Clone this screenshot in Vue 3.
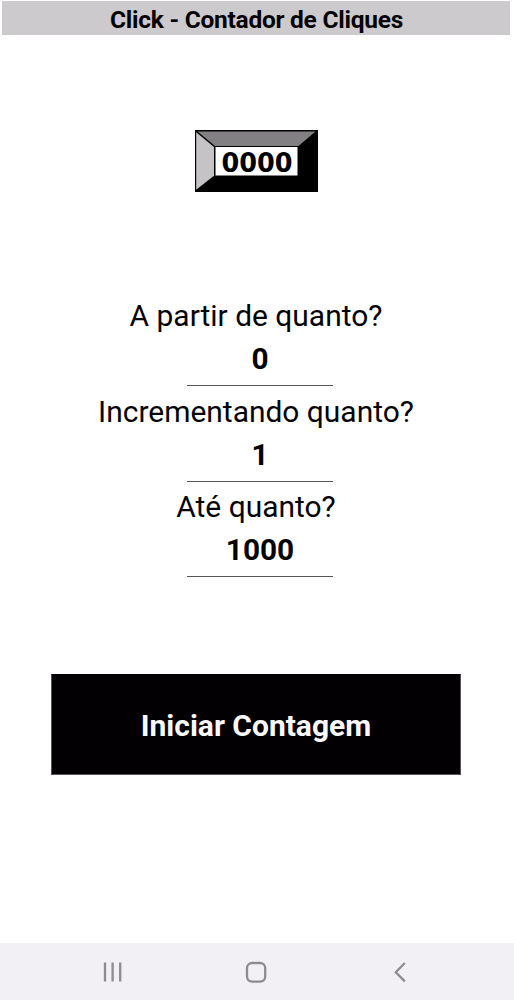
<template>
  <div class="screen">
    <header class="title-bar">
      <h1>Click - Contador de Cliques</h1>
    </header>

    <main class="content">
      <svg class="logo" width="123" height="62" viewBox="0 0 123 62">
        <rect width="123" height="62" fill="#000" />
        <polygon points="2.5,1.5 120.5,1.5 103.5,16 20,16" fill="#828082" />
        <polygon points="1.2,2.2 19,17 19,45.7 1.2,59.7" fill="#c5c3c5" />
        <rect x="20.5" y="17" width="82" height="28.5" fill="#fff" />
        <text x="26.6" y="42" textLength="71" lengthAdjust="spacingAndGlyphs">0000</text>
      </svg>

      <form class="settings" @submit.prevent>
        <div v-for="field in fields" :key="field.id" class="field">
          <label :for="field.id">{{ field.label }}</label>
          <input :id="field.id" v-model="field.value" type="text" inputmode="numeric">
        </div>
        <button type="submit" class="start">Iniciar Contagem</button>
      </form>
    </main>

    <nav class="nav-bar">
      <svg width="20" height="22" viewBox="0 0 20 22">
        <path d="M3 1.5V20.5M10.6 1.5V20.5M18.2 1.5V20.5" />
      </svg>
      <svg width="22" height="22" viewBox="0 0 22 22">
        <rect x="2" y="2" width="18.2" height="18.6" rx="5" />
      </svg>
      <svg width="20" height="22" viewBox="0 0 20 22">
        <path d="M14.8 2L5.8 11.2L14.8 20.4" />
      </svg>
    </nav>
  </div>
</template>

<script setup>
import { reactive } from 'vue';

const fields = reactive([
  { id: 'inicio', label: 'A partir de quanto?', value: '0' },
  { id: 'incremento', label: 'Incrementando quanto?', value: '1' },
  { id: 'limite', label: 'Até quanto?', value: '1000' },
]);
</script>

<style>
body {
  background: #fff;
}
</style>

<style scoped>
.screen {
  display: flex;
  flex-direction: column;
  width: 514px;
  height: 1000px;
  box-sizing: border-box;
  padding-top: 1px;
  overflow: hidden;
  background: #fff;
  color: #050305;
  font-family: Roboto, sans-serif;
}
.title-bar {
  height: 34px;
  margin: 0 4px 0 2px;
  background: #cccacd;
  text-align: center;
}
.title-bar h1 {
  margin: 0 0 0 1px;
  font-size: 24.5px;
  line-height: 37px;
  font-weight: 700;
  letter-spacing: -0.25px;
}
.content {
  flex: 1;
  display: flex;
  flex-direction: column;
  align-items: center;
  padding-top: 95px;
}
.logo {
  display: block;
  margin-right: 1px;
}
.logo text {
  font-family: "DejaVu Sans", sans-serif;
  font-size: 26.5px;
  font-weight: 700;
}
.settings {
  display: flex;
  flex-direction: column;
  align-items: center;
  margin: 103px 2px 0 0;
}
.field {
  display: flex;
  flex-direction: column;
  align-items: center;
  height: 95.5px;
}
.field label {
  font-size: 29.95px;
  line-height: 42px;
  white-space: nowrap;
}
.field input {
  width: 146px;
  height: 49px;
  margin-left: 8px;
  box-sizing: border-box;
  padding: 0 0 4.6px;
  border: 0;
  border-bottom: 1px solid #555;
  outline: none;
  background: transparent;
  color: inherit;
  font: 700 29.8px Roboto, sans-serif;
  text-align: center;
}
.start {
  width: 410px;
  height: 101px;
  margin-top: 92px;
  padding: 2px 0 0;
  border: 1px solid #555;
  border-top-color: #020002;
  background: #020002;
  color: #fbf9fc;
  font: 700 30px Roboto, sans-serif;
}
.nav-bar {
  display: flex;
  align-items: center;
  justify-content: space-between;
  height: 57px;
  box-sizing: border-box;
  padding: 1px 104px 0 102px;
  background: #f2f0f4;
}
.nav-bar svg {
  fill: none;
  stroke: #8d8b8f;
  stroke-width: 2.3;
}
</style>
